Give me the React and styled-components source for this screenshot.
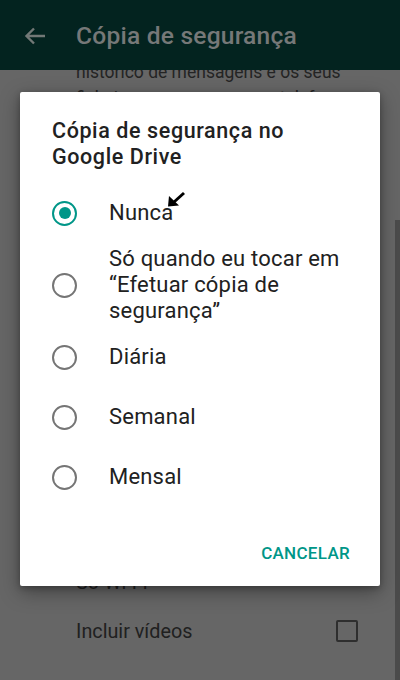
import styled, { createGlobalStyle } from 'styled-components';

const GlobalStyle = createGlobalStyle`
  html, body {
    margin: 0;
    padding: 0;
    background: #666666;
  }
  body {
    font-family: Roboto, "Noto Sans", "Liberation Sans", sans-serif;
  }
`;

const Screen = styled.div`
  position: relative;
  width: 400px;
  height: 680px;
  overflow: hidden;
  background: #666666;
`;

const Toolbar = styled.div`
  position: relative;
  z-index: 1;
  height: 70px;
  background: #03231f;
  display: flex;
  align-items: center;
  padding: 0 0 0 24px;
  box-sizing: border-box;
`;

const BackButton = styled.div`
  width: 22px;
  height: 22px;
  margin: 2px 30px 0 0;
  display: flex;
  align-items: center;
  justify-content: center;
`;

const ToolbarTitle = styled.h1`
  margin: 0;
  font-size: 24.6px;
  font-weight: 500;
  letter-spacing: 0.2px;
  color: #767878;
`;

const Content = styled.div`
  padding: 0 0 0 76px;
  color: #242424;
`;

const BodyLine = styled.div`
  font-size: ${p => p.$size || 17.5}px;
  line-height: 26px;
  white-space: nowrap;
  margin-top: ${p => p.$top || 0}px;
`;

const SettingRow = styled.div`
  display: flex;
  align-items: center;
  justify-content: space-between;
  height: 60px;
  padding-right: 42px;
  margin-top: ${p => p.$top || 0}px;
  font-size: 19.8px;
  color: #202020;
`;

const Checkbox = styled.div`
  width: 18px;
  height: 18px;
  border: 2px solid #2e2e2e;
  border-radius: 2px;
`;

const ScrollBar = styled.div`
  position: absolute;
  right: 0;
  top: 220px;
  bottom: 0;
  width: 5px;
  background: #4b4b4b;
`;

const Dialog = styled.div`
  position: absolute;
  z-index: 2;
  left: 20px;
  top: 92px;
  width: 360px;
  height: 494px;
  background: #ffffff;
  border-radius: 2px;
  box-shadow: 0 6px 20px rgba(0, 0, 0, 0.35), 0 2px 6px rgba(0, 0, 0, 0.25);
  box-sizing: border-box;
  padding: 26px 0 0 0;
  display: flex;
  flex-direction: column;
`;

const DialogTitle = styled.h2`
  margin: 0 0 13px 32px;
  font-size: 21.5px;
  line-height: 26px;
  font-weight: 500;
  letter-spacing: 0.6px;
  color: #212121;
`;

const Options = styled.div`
  display: flex;
  flex-direction: column;
`;

const Option = styled.label`
  display: flex;
  align-items: center;
  min-height: 60px;
  padding: 3px 0;
  box-sizing: border-box;
  cursor: pointer;
`;

const Radio = styled.span`
  flex: none;
  width: 25px;
  height: 25px;
  margin: 0 32px 0 32px;
  border-radius: 50%;
  box-sizing: border-box;
  border: 2.5px solid ${p => (p.$checked ? '#009688' : '#757575')};
  display: flex;
  align-items: center;
  justify-content: center;

  &::after {
    content: '';
    width: 12px;
    height: 12px;
    border-radius: 50%;
    background: #009688;
    display: ${p => (p.$checked ? 'block' : 'none')};
  }
`;

const OptionText = styled.span`
  position: relative;
  font-size: 22px;
  line-height: 26px;
  letter-spacing: 0.2px;
  color: #212121;
  padding-right: 20px;
`;

const Actions = styled.div`
  margin-top: auto;
  display: flex;
  justify-content: flex-end;
  padding: 0 30px 21px 0;
`;

const TextButton = styled.button`
  background: none;
  border: none;
  padding: 0;
  font-family: inherit;
  font-size: 17px;
  font-weight: 500;
  letter-spacing: 0.3px;
  color: #009688;
  text-transform: uppercase;
  line-height: 24px;
`;

const Pointer = styled.svg`
  position: absolute;
  left: 58px;
  top: -9px;
`;

const options = [
  'Nunca',
  'Só quando eu tocar em\n“Efetuar cópia de\nsegurança”',
  'Diária',
  'Semanal',
  'Mensal',
];

const App = () => {
  const selected = 0;

  return (
    <>
      <GlobalStyle />
      <Screen>
        <Toolbar>
          <BackButton>
            <svg width="22" height="18" viewBox="0 0 22 18">
              <path
                d="M21 9H3M10 1.5L2.5 9l7.5 7.5"
                fill="none"
                stroke="#727876"
                strokeWidth="2.4"
              />
            </svg>
          </BackButton>
          <ToolbarTitle>Cópia de segurança</ToolbarTitle>
        </Toolbar>
        <Content>
          <BodyLine $top={-11}>histórico de mensagens e os seus</BodyLine>
          <BodyLine>ficheiros e mensagens no telefone</BodyLine>
          <BodyLine $top={459} $size={19.8}>Só Wi-Fi</BodyLine>
          <SettingRow $top={5}>
            Incluir vídeos
            <Checkbox />
          </SettingRow>
        </Content>
        <ScrollBar />

        <Dialog>
          <DialogTitle>
            Cópia de segurança no
            <br />
            Google Drive
          </DialogTitle>
          <Options>
            {options.map((label, i) => (
              <Option key={`option_${i}`}>
                <Radio $checked={i === selected} />
                <OptionText>
                  {label.split('\n').map((line, j) => (
                    <div key={`line_${i}_${j}`}>{line}</div>
                  ))}
                  {i === selected && (
                    <Pointer width="20" height="18" viewBox="0 0 20 18">
                      <path d="M17 2L7 11" stroke="#000" strokeWidth="3" />
                      <path d="M1 15.5L2 5l10 9.5z" fill="#000" />
                    </Pointer>
                  )}
                </OptionText>
              </Option>
            ))}
          </Options>
          <Actions>
            <TextButton>Cancelar</TextButton>
          </Actions>
        </Dialog>
      </Screen>
    </>
  );
};

export default App;
